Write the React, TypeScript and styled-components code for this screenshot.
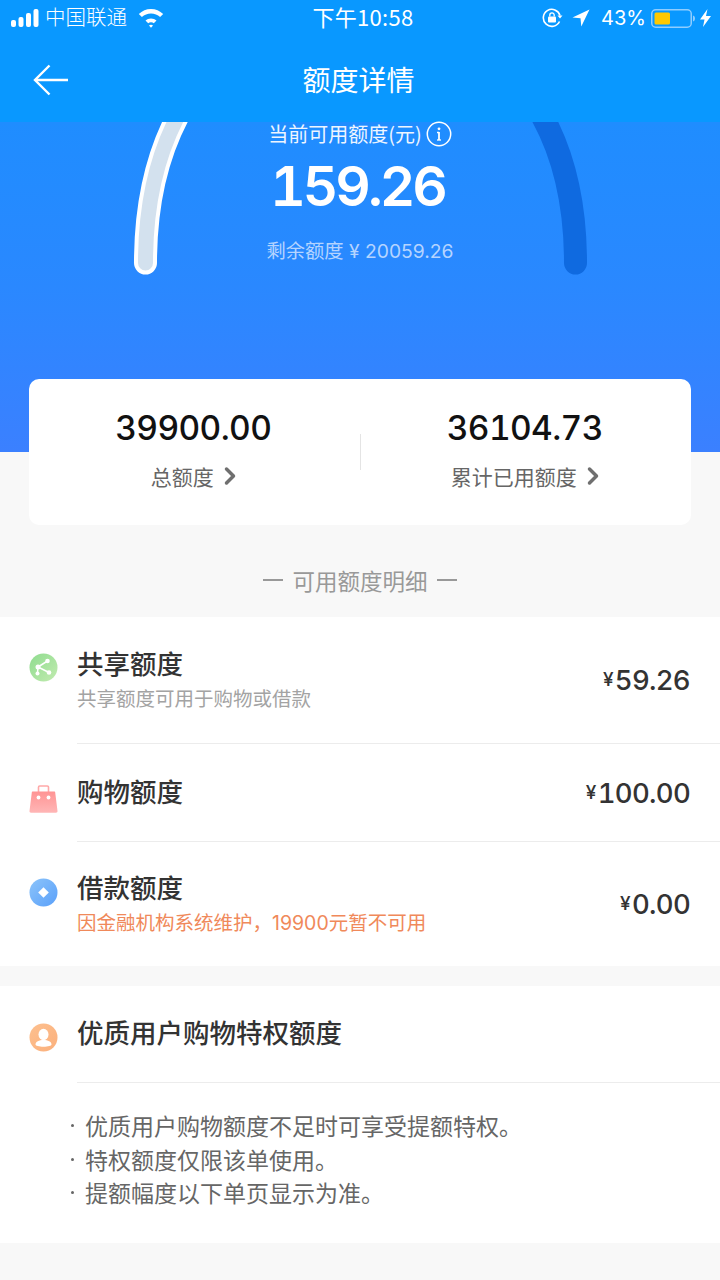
import { ChevronRight } from "lucide-react";
import styled, { createGlobalStyle } from "styled-components";

const GlobalStyle = createGlobalStyle`
  html, body {
    margin: 0;
    padding: 0;
    background: #f8f8f8;
  }
  * {
    box-sizing: border-box;
  }
`;

const cjk = `"Noto Sans CJK SC", sans-serif`;
const numeric = `Inter, "Noto Sans CJK SC", sans-serif`;

const Page = styled.div`
  width: 720px;
  height: 1280px;
  overflow: hidden;
  background: #f8f8f8;
  font-family: ${cjk};
`;

const Top = styled.header`
  height: 122px;
  background: #0998ff;
  color: #fff;
`;

const StatusBar = styled.div`
  height: 36px;
  padding: 0 9px 0 11px;
  display: grid;
  grid-template-columns: 1fr auto 1fr;
  align-items: center;
`;

const StatusLeft = styled.div`
  display: flex;
  align-items: center;
  gap: 6px;
  font-size: 20.5px;
  font-weight: 300;
`;

const Carrier = styled.span`
  padding-bottom: 4px;
`;

const StatusTime = styled.div`
  padding: 0 0 4px 4px;
  font-size: 22px;
  font-weight: 400;
  letter-spacing: 0.3px;
`;

const StatusRight = styled.div`
  display: flex;
  align-items: center;
  justify-content: flex-end;
  gap: 9px;
  font-family: ${numeric};
  font-size: 20px;
  font-weight: 400;
`;

const BatteryLevel = styled.span`
  margin-left: 2px;
`;

const Nav = styled.div`
  height: 86px;
  position: relative;
  display: flex;
  align-items: center;
  justify-content: center;
  padding-right: 3px;
  font-size: 28px;
  font-weight: 400;
`;

const BackButton = styled.button`
  position: absolute;
  left: 33px;
  top: 28px;
  width: 36px;
  height: 32px;
  padding: 0;
  border: none;
  background: none;
  color: #fff;
`;

const Hero = styled.section`
  position: relative;
  height: 330px;
  background: linear-gradient(180deg, #1f8dff 0%, #2a88ff 50%, #3b80ff 100%);
  color: #fff;
  text-align: center;
`;

const Gauge = styled.svg`
  position: absolute;
  left: 0;
  top: 0;
`;

const HeroContent = styled.div`
  position: relative;
  padding-top: 1px;
  display: flex;
  flex-direction: column;
  align-items: center;
`;

const HeroLabel = styled.div`
  height: 22px;
  display: flex;
  align-items: center;
  gap: 4px;
  font-size: 20px;
  line-height: 22px;
  color: #eef5ff;
`;

const HeroAmount = styled.div`
  margin-top: 8px;
  padding-right: 5px;
  font-family: ${numeric};
  font-feature-settings: "tnum";
  font-size: 55px;
  font-weight: 600;
  letter-spacing: -3px;
  line-height: 66px;
`;

const HeroRest = styled.div`
  margin-top: 19px;
  font-family: ${numeric};
  font-size: 19.3px;
  line-height: 26px;
  color: #b5d4ff;
`;

const SummaryCard = styled.section`
  position: relative;
  margin: -73px 29px 0;
  height: 146px;
  padding-bottom: 8px;
  background: #fff;
  border-radius: 10px;
  display: grid;
  grid-template-columns: 1fr 1px 1fr;
  align-items: center;
`;

const SummaryCell = styled.div`
  display: flex;
  flex-direction: column;
  align-items: center;
`;

const SummaryValue = styled.div`
  font-family: ${numeric};
  font-feature-settings: "tnum";
  font-size: 33.5px;
  font-weight: 500;
  letter-spacing: -0.6px;
  line-height: 44px;
  padding-right: 2px;
  color: #111;
`;

const SummaryLabel = styled.div`
  margin-top: 12px;
  display: flex;
  align-items: center;
  gap: 2px;
  font-size: 21px;
  line-height: 28px;
  color: #666;
`;

const Chevron = styled(ChevronRight)`
  margin-right: -6px;
  color: #6f6f6f;
`;

const SummaryDivider = styled.div`
  width: 1px;
  height: 36px;
  margin-top: 8px;
  background: #e4e4e4;
`;

const SectionTitle = styled.div`
  height: 92px;
  padding-top: 17px;
  display: flex;
  align-items: center;
  justify-content: center;
  gap: 9px;
  font-size: 22.5px;
  color: #999;
`;

const TitleDash = styled.span`
  width: 20px;
  height: 2px;
  background: #999;
`;

const Panel = styled.section`
  background: #fff;
  margin-bottom: 20px;
`;

const Row = styled.div<{ $height: number }>`
  height: ${({ $height }) => $height}px;
  display: flex;
  align-items: center;
  padding-left: 29px;
`;

const IconSlot = styled.div<{ $top: number }>`
  width: 29px;
  height: 29px;
  flex: none;
  align-self: flex-start;
  margin-top: ${({ $top }) => $top}px;
  margin-right: 19px;
`;

const RowBody = styled.div<{ $divider?: boolean }>`
  flex: 1;
  height: 100%;
  display: flex;
  align-items: center;
  justify-content: space-between;
  padding-right: 30px;
  border-bottom: ${({ $divider }) => ($divider ? "1px solid #ececec" : "none")};
`;

const RowText = styled.div`
  display: flex;
  flex-direction: column;
  padding-bottom: 2px;
`;

const RowTitle = styled.div`
  margin-bottom: 4px;
  font-size: 26.5px;
  font-weight: 500;
  line-height: 36px;
  color: #333;
`;

const RowHint = styled.div<{ $warning?: boolean }>`
  font-family: ${numeric};
  font-size: 19.5px;
  line-height: 28px;
  color: ${({ $warning }) => ($warning ? "#f0895a" : "#a3a3a3")};
`;

const Amount = styled.div`
  font-family: ${numeric};
  font-feature-settings: "tnum";
  font-size: 27.5px;
  font-weight: 500;
  letter-spacing: -0.7px;
  color: #333;
`;

const Currency = styled.span`
  font-size: 19px;
  vertical-align: 4px;
  margin-right: 2px;
`;

const NoteList = styled.ul`
  margin: 0;
  padding: 26px 0 33px 69px;
  list-style: none;
`;

const Note = styled.li`
  font-size: 23px;
  line-height: 33.5px;
  color: #666;
  display: flex;
`;

const NoteDot = styled.span`
  width: 16px;
  flex: none;
  position: relative;
  &::before {
    content: "";
    position: absolute;
    left: 2px;
    top: 15px;
    width: 3px;
    height: 3px;
    border-radius: 50%;
    background: #666;
  }
`;

const SignalIcon = () => (
  <svg width="28" height="18" viewBox="0 0 28 18" fill="#fff">
    <rect x="0" y="11" width="5" height="7" rx="2" />
    <rect x="7.500" y="8" width="5" height="10" rx="2" />
    <rect x="15" y="4" width="5" height="14" rx="2" />
    <rect x="22.500" y="0" width="5" height="18" rx="2" />
  </svg>
);

const WifiIcon = () => (
  <svg width="26" height="19" viewBox="0 0 26 19" fill="#fff" style={{ marginLeft: 5 }}>
    <path d="M13 4.500c3.500 0 6.700 1.300 9.100 3.600L25.200 5C21.900 1.900 17.600 0 13 0S4.100 1.900.8 5l3.100 3.100C6.300 5.800 9.500 4.500 13 4.500z" />
    <path d="M13 9.500c2.100 0 4 .8 5.500 2.100l-2.700 2.700A4.200 4.200 0 0 0 13 13.300a4.200 4.200 0 0 0-2.800 1L7.500 11.600C9 10.300 10.900 9.500 13 9.500z" />
    <path d="M13 18.800l-2-2.200a2.900 2.900 0 0 1 4 0z" />
  </svg>
);

const RotationLockIcon = () => (
  <svg width="21" height="20" viewBox="0 0 21 20" fill="none">
    <path d="M17.500 13.500A8.500 8.500 0 1 1 18 7.500" stroke="#fff" strokeWidth="1.600" />
    <path d="M15.500 7.500h5l-2.500 3z" fill="#fff" />
    <rect x="6" y="8.500" width="8" height="6" rx="1" fill="#fff" />
    <path d="M7.800 8.500V7a2.200 2.200 0 0 1 4.400 0v1.500" stroke="#fff" strokeWidth="1.300" />
  </svg>
);

const LocationIcon = () => (
  <svg width="18" height="18" viewBox="0 0 18 18" fill="#fff">
    <path d="M17.500.5L.5 8.500l8 .8.800 8.200z" />
  </svg>
);

const BatteryIcon = () => (
  <svg width="44" height="19" viewBox="0 0 44 19" fill="none" style={{ marginLeft: -4 }}>
    <rect x=".75" y=".75" width="39.500" height="17.500" rx="4" stroke="#8fcdff" strokeWidth="1.500" />
    <rect x="3.500" y="3.500" width="15.500" height="12" rx="1.500" fill="#ffc800" />
    <path d="M42 6.500c1.300.4 2 1.500 2 3s-.7 2.600-2 3z" fill="#8fcdff" />
  </svg>
);

const BoltIcon = () => (
  <svg width="11" height="18" viewBox="0 0 11 18" fill="#fff" style={{ marginLeft: -4 }}>
    <path d="M7.500 0L0 10.500h4.500L3 18l8-11H6z" />
  </svg>
);

const BackIcon = () => (
  <svg width="36" height="32" viewBox="0 0 36 32" fill="none" stroke="#fff" strokeWidth="2.400">
    <path d="M35 16H2" />
    <path d="M16.500 1.500L2 16l14.500 14.500" />
  </svg>
);

const InfoIcon = () => (
  <svg width="26" height="26" viewBox="0 0 26 26" fill="none">
    <circle cx="13" cy="13" r="11.700" stroke="#fff" strokeWidth="1.500" />
    <circle cx="13" cy="7.800" r="1.400" fill="#fff" />
    <path d="M13 11v8" stroke="#fff" strokeWidth="1.800" />
    <path d="M11 11.500h2" stroke="#fff" strokeWidth="1.300" />
    <path d="M11 19h4" stroke="#fff" strokeWidth="1.300" />
  </svg>
);

const ShareBadge = () => (
  <svg width="29" height="29" viewBox="0 0 29 29">
    <defs>
      <linearGradient id="share" x1="0" y1="0" x2="1" y2="1">
        <stop offset="0" stopColor="#8fdc8f" />
        <stop offset="1" stopColor="#c2ebb0" />
      </linearGradient>
    </defs>
    <circle cx="14.500" cy="14.500" r="14" fill="url(#share)" />
    <path d="M9 14l9.500-6M9 14l11 5.500M9 14l-.5 6" stroke="#fff" strokeWidth="1.500" />
    <circle cx="18.500" cy="8" r="2.300" fill="#fff" />
    <circle cx="9" cy="14" r="2.500" fill="#fff" />
    <circle cx="20" cy="19.500" r="2.300" fill="#fff" />
    <circle cx="8.500" cy="20.500" r="2" fill="#fff" />
  </svg>
);

const BagBadge = () => (
  <svg width="29" height="29" viewBox="0 0 29 29" fill="none">
    <defs>
      <linearGradient id="bag" x1="0" y1="0" x2="0" y2="1">
        <stop offset="0" stopColor="#ff9494" />
        <stop offset="1" stopColor="#ffb6b6" />
      </linearGradient>
    </defs>
    <path d="M9.500 7V2.200A1.200 1.200 0 0 1 10.700 1h7.600a1.200 1.200 0 0 1 1.200 1.200V7" stroke="#ffa9a9" strokeWidth="1.600" />
    <path d="M3.800 6.500h21.400c.6 0 1 .4 1 1l2.300 18.500c.1 1-.5 1.700-1.500 1.700H2c-1 0-1.600-.7-1.500-1.700L2.800 7.500c0-.6.400-1 1-1z" fill="url(#bag)" />
    <circle cx="9.500" cy="12.500" r="1.900" fill="#fff" />
    <circle cx="19.500" cy="12.500" r="1.900" fill="#fff" />
  </svg>
);

const DiamondBadge = () => (
  <svg width="29" height="29" viewBox="0 0 29 29">
    <defs>
      <linearGradient id="diamond" x1="0" y1="0" x2="1" y2="1">
        <stop offset="0" stopColor="#8cc4fa" />
        <stop offset="1" stopColor="#5aa0fa" />
      </linearGradient>
    </defs>
    <circle cx="14.500" cy="14.500" r="14" fill="url(#diamond)" />
    <path d="M14.500 9.200l5.300 5.300-5.300 5.300-5.300-5.300z" fill="#fff" />
  </svg>
);

const PersonBadge = () => (
  <svg width="29" height="29" viewBox="0 0 29 29">
    <defs>
      <linearGradient id="person" x1="0" y1="0" x2="1" y2="1">
        <stop offset="0" stopColor="#fdc08f" />
        <stop offset="1" stopColor="#fbb07c" />
      </linearGradient>
    </defs>
    <circle cx="14.500" cy="14.500" r="14" fill="url(#person)" />
    <ellipse cx="14.500" cy="11.500" rx="5" ry="5.800" fill="#fff" />
    <path d="M6.500 21.500c0-3 3.500-4.500 8-4.500s8 1.500 8 4.500c0 1.300-3.500 2.200-8 2.200s-8-.9-8-2.200z" fill="#fff" />
  </svg>
);

const notes = [
  "优质用户购物额度不足时可享受提额特权。",
  "特权额度仅限该单使用。",
  "提额幅度以下单页显示为准。",
];

export default function App() {
  return (
    <Page>
      <GlobalStyle />
      <Top>
        <StatusBar>
          <StatusLeft>
            <SignalIcon />
            <Carrier>中国联通</Carrier>
            <WifiIcon />
          </StatusLeft>
          <StatusTime>下午10:58</StatusTime>
          <StatusRight>
            <RotationLockIcon />
            <LocationIcon />
            <BatteryLevel>43%</BatteryLevel>
            <BatteryIcon />
            <BoltIcon />
          </StatusRight>
        </StatusBar>
        <Nav>
          <BackButton aria-label="返回">
            <BackIcon />
          </BackButton>
          额度详情
        </Nav>
      </Top>

      <Hero>
        <Gauge width="720" height="330" viewBox="0 0 720 330" fill="none">
          <path d="M145.500 141C145.500 80 158 30 180 -10" stroke="#fff" strokeWidth="23" strokeLinecap="round" />
          <path d="M145.500 141C145.500 80 158 30 180 -10" stroke="#d3e1ee" strokeWidth="15" strokeLinecap="round" />
          <path d="M575.500 141C575.500 80 563 30 540 -10" stroke="#0f6ae0" strokeWidth="23" strokeLinecap="round" />
        </Gauge>
        <HeroContent>
          <HeroLabel>
            当前可用额度(元)
            <InfoIcon />
          </HeroLabel>
          <HeroAmount>159.26</HeroAmount>
          <HeroRest>剩余额度 ¥ 20059.26</HeroRest>
        </HeroContent>
      </Hero>

      <SummaryCard>
        <SummaryCell>
          <SummaryValue>39900.00</SummaryValue>
          <SummaryLabel>
            总额度
            <Chevron size={28} strokeWidth={3} />
          </SummaryLabel>
        </SummaryCell>
        <SummaryDivider />
        <SummaryCell>
          <SummaryValue>36104.73</SummaryValue>
          <SummaryLabel>
            累计已用额度
            <Chevron size={28} strokeWidth={3} />
          </SummaryLabel>
        </SummaryCell>
      </SummaryCard>

      <SectionTitle>
        <TitleDash />
        可用额度明细
        <TitleDash />
      </SectionTitle>

      <Panel>
        <Row $height={127}>
          <IconSlot $top={36}>
            <ShareBadge />
          </IconSlot>
          <RowBody $divider>
            <RowText>
              <RowTitle>共享额度</RowTitle>
              <RowHint>共享额度可用于购物或借款</RowHint>
            </RowText>
            <Amount>
              <Currency>¥</Currency>59.26
            </Amount>
          </RowBody>
        </Row>
        <Row $height={98}>
          <IconSlot $top={41}>
            <BagBadge />
          </IconSlot>
          <RowBody $divider>
            <RowTitle>购物额度</RowTitle>
            <Amount>
              <Currency>¥</Currency>100.00
            </Amount>
          </RowBody>
        </Row>
        <Row $height={124}>
          <IconSlot $top={36}>
            <DiamondBadge />
          </IconSlot>
          <RowBody>
            <RowText>
              <RowTitle>借款额度</RowTitle>
              <RowHint $warning>因金融机构系统维护，19900元暂不可用</RowHint>
            </RowText>
            <Amount>
              <Currency>¥</Currency>0.00
            </Amount>
          </RowBody>
        </Row>
      </Panel>

      <Panel>
        <Row $height={97}>
          <IconSlot $top={37}>
            <PersonBadge />
          </IconSlot>
          <RowBody $divider>
            <RowTitle>优质用户购物特权额度</RowTitle>
          </RowBody>
        </Row>
        <NoteList>
          {notes.map((note) => (
            <Note key={note}>
              <NoteDot />
              {note}
            </Note>
          ))}
        </NoteList>
      </Panel>
    </Page>
  );
}
